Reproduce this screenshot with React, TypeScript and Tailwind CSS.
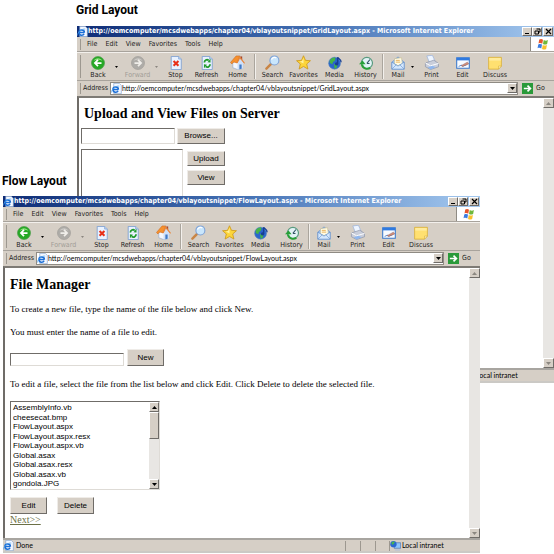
import { useId, type ReactNode } from "react";

function IePage({ className = "size-[11px] shrink-0" }: { className?: string }) {
  return (
    <svg viewBox="0 0 16 16" className={className} aria-hidden="true">
      <path d="M4 .5h8l3 3v12H4z" fill="#f4f8ff" stroke="#7d9cc8" strokeWidth=".9" />
      <path d="M2.600 9.600h8.400M10.800 9.600C10.800 4.600 2.800 4.600 2.800 9.600c0 4.600 5.800 5 7.500 2" fill="none" stroke="#1d6fd6" strokeWidth="2.200" />
      <path d="M1 14c-1.500-4 6-10.500 11-9.500" fill="none" stroke="#4ba0ee" strokeWidth="1" />
    </svg>
  );
}

function BackIcon() {
  return (
    <svg viewBox="0 0 16 16" className="size-[14px]" aria-hidden="true">
      <circle cx="8" cy="8" r="7.400" fill="#25a825" stroke="#4a9c47" strokeWidth=".8" />
      <path d="M3 5.500C5 1.500 11 1.500 13 5.500 10 4 6 4 3 5.500z" fill="#8ee27c" />
      <path d="M12 8H4.800M8 4.500 4.500 8 8 11.500" fill="none" stroke="#fff" strokeWidth="2" />
    </svg>
  );
}

function ForwardIcon() {
  return (
    <svg viewBox="0 0 16 16" className="size-[14px]" aria-hidden="true">
      <circle cx="8" cy="8" r="7.400" fill="#aeaca8" stroke="#a09e9a" strokeWidth=".8" />
      <path d="M3 5.500C5 1.500 11 1.500 13 5.500 10 4 6 4 3 5.500z" fill="#cbc9c5" />
      <path d="M4 8h7.200M8 4.500 11.500 8 8 11.500" fill="none" stroke="#f0eeea" strokeWidth="2" />
    </svg>
  );
}

function StopIcon() {
  return (
    <svg viewBox="0 0 16 16" className="size-[14px]" aria-hidden="true">
      <path d="M2.500.5H11l3 3v12H2.500z" fill="#e9f2ff" stroke="#7d9fd0" />
      <path d="M11 .5v3h3" fill="#b9d2f4" stroke="#7d9fd0" strokeWidth=".8" />
      <path d="m5.200 5.700 5.600 5.400M10.800 5.700l-5.600 5.400" stroke="#e83018" strokeWidth="2.400" />
    </svg>
  );
}

function RefreshIcon() {
  return (
    <svg viewBox="0 0 16 16" className="size-[14px]" aria-hidden="true">
      <path d="M2.500.5H11l3 3v12H2.500z" fill="#e9f2ff" stroke="#7d9fd0" />
      <path d="M11 .5v3h3" fill="#b9d2f4" stroke="#7d9fd0" strokeWidth=".8" />
      <path d="M5 7.500c0-3 3-4 5-2.500" fill="none" stroke="#1f9a2c" strokeWidth="2" />
      <path d="m8.500 7 3.500.5V3z" fill="#1f9a2c" />
      <path d="M11.500 9.500c0 3-3 4-5 2.500" fill="none" stroke="#1f9a2c" strokeWidth="2" />
      <path d="m8 10-3.500-.5V14z" fill="#1f9a2c" />
    </svg>
  );
}

function HomeIcon() {
  return (
    <svg viewBox="0 0 16 16" className="size-[15px]" aria-hidden="true">
      <path d="M11 1.500h2V6h-2z" fill="#a54a32" />
      <path d="M3 8.500 6 5l7.500 3.500v6L8 15.500l-5-2z" fill="#f4f7fd" stroke="#88a0c8" strokeWidth=".6" />
      <path d="M8 8.500 11.500 4 15 9l-1 .5v5L8 15.500z" fill="#cfe0f8" />
      <path d="M.5 8 6.500 1h4L7.500 8.500 4 7.500 2 9.500z" fill="#f6912e" stroke="#cd6a1e" strokeWidth=".6" />
      <path d="m7.500 8.500 3-6L15.500 9" fill="none" stroke="#e8853a" strokeWidth="1.200" />
      <path d="M10 10h2.400v4.600l-2.400.5z" fill="#3f79c8" />
    </svg>
  );
}

function SearchIcon() {
  return (
    <svg viewBox="0 0 16 16" className="size-[15px]" aria-hidden="true">
      <path d="m1.500 14.500 5-5" stroke="#c98545" strokeWidth="2.600" strokeLinecap="round" />
      <circle cx="10" cy="5.800" r="4.800" fill="#c9e6fc" stroke="#7fa4d8" strokeWidth="1.200" />
      <path d="M7 5c.5-2 3-3 5-2" fill="none" stroke="#fff" strokeWidth="1.400" />
    </svg>
  );
}

function StarIcon() {
  return (
    <svg viewBox="0 0 16 16" className="size-[15px]" aria-hidden="true">
      <path d="m8 .8 2.100 4.900 5.300.4-4 3.500 1.300 5.400L8 12.200 3.300 15l1.300-5.400-4-3.500 5.300-.4z" fill="#fcd53a" stroke="#cf9a1c" strokeWidth=".9" />
      <path d="M8 3v6L4 7l2.500-.5z" fill="#fff2a0" />
    </svg>
  );
}

function MediaIcon() {
  return (
    <svg viewBox="0 0 16 16" className="size-[14px]" aria-hidden="true">
      <circle cx="7.500" cy="8.200" r="6.800" fill="#2a66cc" stroke="#5f8ac0" strokeWidth=".7" />
      <path d="M2 5c2-3 5-3.500 6.500-3L8 5 5.500 7 5 9.500 2 8zM7 9l4 1-1.500 4-2 .6z" fill="#45b548" />
      <path d="M11 9V1.500c1 2 4 2 4 5.500" fill="none" stroke="#183f94" strokeWidth="1.500" />
      <circle cx="9.800" cy="9" r="1.900" fill="#183f94" />
    </svg>
  );
}

function HistoryIcon() {
  return (
    <svg viewBox="0 0 16 16" className="size-[14px]" aria-hidden="true">
      <circle cx="9" cy="8" r="6.400" fill="#e2f3f6" stroke="#5a9c80" strokeWidth="1.300" />
      <path d="M9 8.500 12.500 4M9 8.500h3" stroke="#356" strokeWidth="1.200" />
      <path d="M13 13.500C9 16 4 14 3.500 9.500" fill="none" stroke="#28a038" strokeWidth="2.300" />
      <path d="M0 9.500 4 5l3.500 4.500z" fill="#28a038" />
    </svg>
  );
}

function MailIcon() {
  return (
    <svg viewBox="0 0 16 16" className="size-[14px]" aria-hidden="true">
      <path d="M1 7 8 1l7 6v8H1z" fill="#9cc3f2" stroke="#6792cc" strokeWidth=".8" />
      <path d="m4 3 8-1 1 7-5 2-4-2z" fill="#fffbe4" stroke="#c4b98a" strokeWidth=".6" />
      <path d="M5.500 5h4.500M5.500 7h5" stroke="#e6a33e" strokeWidth=".9" />
      <path d="m1 7 7 4.500L15 7v8H1z" fill="#d4e7fd" stroke="#6792cc" strokeWidth=".8" />
      <path d="m1 15 5-5M15 15l-5-5" stroke="#6792cc" strokeWidth=".7" />
    </svg>
  );
}

function PrintIcon() {
  return (
    <svg viewBox="0 0 16 16" className="size-[15px]" aria-hidden="true">
      <path d="m3 1 6-.7L12 7l-6 1.500z" fill="#eef5ff" stroke="#94aeda" strokeWidth=".7" />
      <path d="m1.500 8.500 9-3 5 3.500v3.500L7 15.500l-5.500-3z" fill="#c9cedb" stroke="#8890a4" strokeWidth=".7" />
      <path d="M1.500 8.500 7 11.500 15.500 9" fill="none" stroke="#fff" />
      <path d="m4 13 5-1.600 3.500 1.600L7 15.400z" fill="#8fb7ef" />
    </svg>
  );
}

function EditIcon() {
  return (
    <svg viewBox="0 0 16 16" className="size-[14px]" aria-hidden="true">
      <path d="M.8 2h14.400v12H.8z" fill="#f8fbff" stroke="#3878cc" strokeWidth="1.200" />
      <path d="M.8 2h14.400v3H.8z" fill="#2f7ae0" />
      <path d="m3 12 3-1.500 2 1L12 10" fill="none" stroke="#4a7fc8" />
      <path d="m6 11 7-4 1.500 2-7 3z" fill="#d69078" stroke="#8a5a60" strokeWidth=".6" />
    </svg>
  );
}

function DiscussIcon() {
  return (
    <svg viewBox="0 0 16 16" className="size-[14px]" aria-hidden="true">
      <path d="M.7 1.500h14.600v10L12 15H.7z" fill="#ffe070" stroke="#d8ae3a" strokeWidth=".9" />
      <path d="M1.500 2.300h13v3h-13z" fill="#ffeb9c" />
      <path d="M12 15v-3.500h3.300z" fill="#fff6c4" stroke="#d8ae3a" strokeWidth=".7" />
    </svg>
  );
}

function WindowsFlag() {
  return (
    <svg viewBox="0 0 16 16" className="size-[12px]" aria-hidden="true">
      <path d="M3 2c2-1.200 3.500-.8 5 .2L7 7.500C5.500 6.500 4 6.300 2 7.300z" fill="#e8562c" />
      <path d="M9 2.800c2 1 3.500 1 5.500 0L13.500 8c-2 1-3.500 1-5.500 0z" fill="#6fb83a" />
      <path d="M1.700 8.500c2-1 3.500-.8 5 .2l-1 5.300C4.200 13 2.700 12.800.7 13.800z" fill="#3a7ce0" />
      <path d="M7.700 9.200c2 1 3.500 1 5.500 0l-1 5.300c-2 1-3.500 1-5.500 0z" fill="#f8c02c" />
    </svg>
  );
}

function GoIcon() {
  return (
    <svg viewBox="0 0 12 12" className="size-[11px]" aria-hidden="true">
      <path d="M0 0h12v12H0z" fill="#2a9a3a" />
      <path d="M2 6h7M6 2.800 9.200 6 6 9.200" fill="none" stroke="#fff" strokeWidth="1.800" />
    </svg>
  );
}

function IntranetIcon() {
  return (
    <svg viewBox="0 0 16 16" className="size-[11px] shrink-0" aria-hidden="true">
      <path d="M6 4h9.500v8H6z" fill="#8fc4fa" stroke="#4a72b0" />
      <path d="M7 13.500h8v2H7z" fill="#b8c4d8" />
      <circle cx="5" cy="6" r="4.600" fill="#2a68d0" />
      <path d="M2 4c2-2 4-2 5-1L5 6 3 7z" fill="#49b84a" />
    </svg>
  );
}

function Caret({ up = false, tone = "fill-black", size = "h-[3px] w-[5px]" }: { up?: boolean; tone?: string; size?: string }) {
  return (
    <svg viewBox="0 0 5 3" className={`${size} ${tone}`} aria-hidden="true">
      <path d={up ? "M0 3 2.500 0 5 3z" : "M0 0h5L2.500 3z"} />
    </svg>
  );
}

const raised = "border border-t-white border-l-white border-r-[#6f6c68] border-b-[#6f6c68] bg-[#d6cfc6]";
const sunken = "border border-t-[#6f6c68] border-l-[#6f6c68] border-r-[#dedbd6] border-b-[#dedbd6] bg-white";

function Tool({ icon, label, className = "w-[31px]", dim = false }: { icon: ReactNode; label: string; className?: string; dim?: boolean }) {
  return (
    <button type="button" disabled={dim} className={`flex shrink-0 flex-col items-center ${className} ${dim ? "text-[#a19d97]" : ""}`}>
      <span className="flex h-4 items-center">{icon}</span>
      <span className="leading-[8px]">{label}</span>
    </button>
  );
}

function ToolDivider() {
  return <span className="mx-px h-[25px] w-[2px] shrink-0 border-r border-l border-r-[#f3f0ec] border-l-[#aaa59d]" />;
}

function Grip() {
  return <span className="mr-[2px] ml-[3px] h-[11px] w-px shrink-0 bg-[#9d9890]" />;
}

function ScrollBar() {
  return (
    <div className="flex w-[11px] shrink-0 flex-col justify-between bg-[#e8e6e3]">
      <button type="button" aria-label="Scroll up" disabled className={`flex h-[10px] items-center justify-center ${raised}`}>
        <Caret up tone="fill-[#8b8780]" />
      </button>
      <button type="button" aria-label="Scroll down" disabled className={`flex h-[10px] items-center justify-center ${raised}`}>
        <Caret tone="fill-[#8b8780]" />
      </button>
    </div>
  );
}

function BrowserWindow({ page, className, children }: { page: string; className: string; children: ReactNode }) {
  const addressId = useId();
  const url = `http://oemcomputer/mcsdwebapps/chapter04/vblayoutsnippet/${page}`;
  return (
    <section className={`absolute flex min-h-[357px] flex-col bg-[#d6cfc6] font-['DejaVu_Sans_Condensed','DejaVu_Sans',sans-serif] text-[7px] text-[#222] ${className}`}>
      <header className="flex h-[11px] shrink-0 items-center bg-linear-to-r from-[#0f2c76] via-[#4471b4] to-[#a6caf0] text-white">
        <IePage />
        <h2 className="grow overflow-hidden text-[7px] font-bold whitespace-nowrap">{url} - Microsoft Internet Explorer</h2>
        <div className="flex shrink-0 pr-px text-black">
          <button type="button" aria-label="Minimize" className={`flex h-[9px] w-[10px] items-end justify-center ${raised}`}>
            <span className="mb-px h-px w-1 bg-black" />
          </button>
          <button type="button" aria-label="Restore" className={`mr-px flex h-[9px] w-[10px] items-center justify-center ${raised}`}>
            <svg viewBox="0 0 7 7" className="size-[7px]" aria-hidden="true">
              <path d="M2.500 1h3.500v3H4.500M1 3h3.500v3H1z" fill="none" stroke="#000" />
            </svg>
          </button>
          <button type="button" aria-label="Close" className={`flex h-[9px] w-[10px] items-center justify-center ${raised}`}>
            <svg viewBox="0 0 7 7" className="size-[7px]" aria-hidden="true">
              <path d="m1 1 5 5M6 1 1 6" stroke="#000" strokeWidth="1.200" />
            </svg>
          </button>
        </div>
      </header>

      <div className="flex h-[15px] shrink-0 items-center border-b border-[#a8a39c]">
        <Grip />
        <nav className="flex grow gap-2 pl-1">
          {["File", "Edit", "View", "Favorites", "Tools", "Help"].map((item) => (
            <button key={item} type="button" className="leading-[9px]">{item}</button>
          ))}
        </nav>
        <span className="flex h-[14px] w-6 items-center justify-center border-l border-[#8f8b84] bg-white">
          <WindowsFlag />
        </span>
      </div>

      <div className="flex h-7 shrink-0 items-center border-t border-[#f3f0ec]">
        <span className="ml-[3px] h-[23px] w-px shrink-0 bg-[#9d9890]" />
        <Tool icon={<BackIcon />} label="Back" className="w-[34px]" />
        <span className="flex w-[5px] shrink-0"><Caret size="h-[2px] w-[3px]" /></span>
        <Tool icon={<ForwardIcon />} label="Forward" className="w-[35px]" dim />
        <span className="flex w-[5px] shrink-0"><Caret size="h-[2px] w-[3px]" tone="fill-[#8b8780]" /></span>
        <Tool icon={<StopIcon />} label="Stop" />
        <Tool icon={<RefreshIcon />} label="Refresh" />
        <Tool icon={<HomeIcon />} label="Home" />
        <ToolDivider />
        <Tool icon={<SearchIcon />} label="Search" />
        <Tool icon={<StarIcon />} label="Favorites" />
        <Tool icon={<MediaIcon />} label="Media" />
        <Tool icon={<HistoryIcon />} label="History" />
        <ToolDivider />
        <Tool icon={<MailIcon />} label="Mail" className="w-[26px]" />
        <span className="flex w-[5px] shrink-0"><Caret size="h-[2px] w-[3px]" /></span>
        <Tool icon={<PrintIcon />} label="Print" />
        <Tool icon={<EditIcon />} label="Edit" />
        <Tool icon={<DiscussIcon />} label="Discuss" className="w-[34px]" />
      </div>

      <div className="flex h-[15px] shrink-0 items-center border-t border-[#a8a39c]">
        <Grip />
        <label htmlFor={addressId} className="w-[27px] shrink-0">Address</label>
        <div className="flex h-[13px] grow items-center border border-[#8f8b84] bg-white">
          <IePage />
          <input id={addressId} type="text" defaultValue={url} className="min-w-0 grow font-['Lato',sans-serif] text-black outline-none" />
          <button type="button" aria-label="Address history" className={`flex h-[10px] w-[10px] shrink-0 items-center justify-center ${raised}`}>
            <Caret />
          </button>
        </div>
        <button type="button" className="flex w-9 shrink-0 items-center gap-[3px] pl-1">
          <GoIcon />
          Go
        </button>
      </div>

      <div className="mt-px flex grow border-t-2 border-l-2 border-t-[#7d7a75] border-l-[#6f6c68] bg-white">
        <div className="min-w-0 grow text-black">{children}</div>
        <ScrollBar />
      </div>

      <footer className="flex h-[15px] shrink-0 items-center border-t-2 border-b-2 border-t-[#a8a5a0] border-b-[#cbc9c5] font-['Lato',sans-serif] text-black">
        <span className="flex grow items-center gap-[2px]"><IePage /> Done</span>
        <span className="h-[10px] w-[15px] border-l border-[#9d9890]" />
        <span className="h-[10px] w-[15px] border-l border-[#9d9890]" />
        <span className="h-[10px] w-[14px] border-l border-[#9d9890]" />
        <span className="flex h-[10px] w-[91px] items-center gap-px border-l border-[#9d9890] whitespace-nowrap">
          <IntranetIcon /> Local intranet
        </span>
      </footer>
    </section>
  );
}

function PushButton({ children, className }: { children: ReactNode; className: string }) {
  return (
    <button type="button" className={`shrink-0 border border-t-[#efece8] border-l-[#efece8] border-r-[#6f6c68] border-b-[#6f6c68] bg-[#d6cfc6] font-['Liberation_Sans',sans-serif] text-[8px] ${className}`}>
      {children}
    </button>
  );
}

const files = [
  "AssemblyInfo.vb",
  "cheesecat.bmp",
  "FlowLayout.aspx",
  "FlowLayout.aspx.resx",
  "FlowLayout.aspx.vb",
  "Global.asax",
  "Global.asax.resx",
  "Global.asax.vb",
  "gondola.JPG",
];

function UploadPage() {
  return (
    <div className="pt-[7px] pl-[2px]">
      <h3 className="pl-[3px] font-['Liberation_Serif',serif] text-[14px] leading-[18px] font-bold">Upload and View Files on Server</h3>
      <div className="mt-[5px] flex gap-[2px]">
        <input type="text" aria-label="File to upload" className={`h-4 w-[94px] ${sunken}`} />
        <PushButton className="h-4 w-12">Browse...</PushButton>
      </div>
      <div className="mt-[5px] flex gap-1">
        <textarea aria-label="Files on server" className={`h-[120px] w-[102px] resize-none ${sunken}`} />
        <div className="flex flex-col gap-1 pt-[2px]">
          <PushButton className="h-[15px] w-[38px]">Upload</PushButton>
          <PushButton className="h-[15px] w-[38px]">View</PushButton>
        </div>
      </div>
    </div>
  );
}

function FileManagerPage() {
  return (
    <div className="px-[5px] pt-2 font-['Liberation_Serif',serif] text-[9px] leading-[12px]">
      <h3 className="text-[14px] leading-[18px] font-bold">File Manager</h3>
      <p className="mt-[9px]">To create a new file, type the name of the file below and click New.</p>
      <p className="mt-[11px]">You must enter the name of a file to edit.</p>
      <div className="mt-[11px] flex items-end gap-[3px]">
        <input type="text" aria-label="New file name" className={`h-[13px] w-[114px] ${sunken}`} />
        <PushButton className="h-[17px] w-[37px]">New</PushButton>
      </div>
      <p className="mt-3">To edit a file, select the file from the list below and click Edit. Click Delete to delete the selected file.</p>
      <div className={`mt-[11px] flex h-[89px] w-[150px] ${sunken}`}>
        <select size={9} aria-label="Files" className="h-[87px] min-w-0 grow appearance-none overflow-hidden bg-white pt-px font-['Liberation_Sans',sans-serif] text-[8px] leading-[9px] outline-none">
          {files.map((file) => (
            <option key={file} className="min-h-0 px-[2px] pt-0 pb-0 odd:pb-px">{file}</option>
          ))}
        </select>
        <div className="flex w-[10px] shrink-0 flex-col bg-[#e8e6e3]">
          <button type="button" aria-label="Scroll list up" className={`flex h-[10px] items-center justify-center ${raised}`}><Caret up /></button>
          <div className={`h-[27px] ${raised}`} />
          <button type="button" aria-label="Scroll list down" className={`mt-auto flex h-[10px] items-center justify-center ${raised}`}><Caret /></button>
        </div>
      </div>
      <div className="mt-[7px] flex gap-[10px]">
        <PushButton className="h-[17px] w-[37px]">Edit</PushButton>
        <PushButton className="h-[17px] w-[37px]">Delete</PushButton>
      </div>
      <a href="#next" className="text-[10px] text-[#6b7046] underline">Next&gt;&gt;</a>
    </div>
  );
}

export default function App() {
  return (
    <main className="relative min-h-screen overflow-hidden bg-white font-['Roboto',sans-serif] text-black">
      <h1 className="absolute top-[2px] left-[76px] text-[12px] leading-4 font-bold">Grid Layout</h1>
      <BrowserWindow page="GridLayout.aspx" className="top-[26px] right-0 left-[77px]">
        <UploadPage />
      </BrowserWindow>
      <h1 className="absolute top-[173px] left-[2px] text-[12px] leading-4 font-bold">Flow Layout</h1>
      <BrowserWindow page="FlowLayout.aspx" className="top-[196px] right-[74px] left-[3px]">
        <FileManagerPage />
      </BrowserWindow>
    </main>
  );
}
